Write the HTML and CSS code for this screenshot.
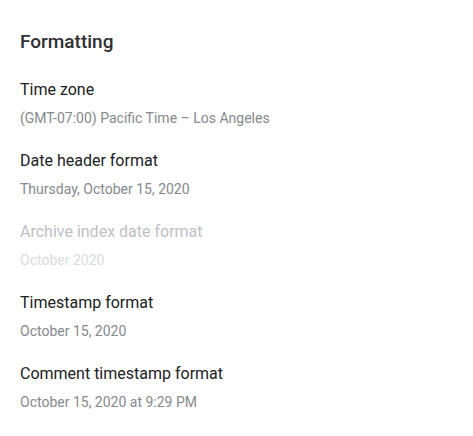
FILE: index.html
```html
<!DOCTYPE html>
<html>
<head>
<meta charset="utf-8">
<link rel="stylesheet" href="styles.css">
</head>
<body>
<section class="panel">
  <h2 class="title">Formatting</h2>
  <div class="list">
    <div class="item">
      <div class="label">Time zone</div>
      <div class="value">(GMT-07:00) Pacific Time – Los Angeles</div>
    </div>
    <div class="item">
      <div class="label">Date header format</div>
      <div class="value">Thursday, October 15, 2020</div>
    </div>
    <div class="item disabled">
      <div class="label">Archive index date format</div>
      <div class="value">October 2020</div>
    </div>
    <div class="item">
      <div class="label">Timestamp format</div>
      <div class="value">October 15, 2020</div>
    </div>
    <div class="item">
      <div class="label">Comment timestamp format</div>
      <div class="value">October 15, 2020 at 9:29 PM</div>
    </div>
  </div>
</section>
</body>
</html>
```
FILE: styles.css
```css
html, body {
  margin: 0;
  padding: 0;
  background: #ffffff;
}
body {
  font-family: Roboto, "Liberation Sans", Arial, sans-serif;
  color: #202124;
}
.panel {
  padding: 28px 20px 0 20px;
}
.title {
  margin: 0;
  font-size: 19px;
  font-weight: 500;
  line-height: 28px;
  color: #2d2f33;
}
.list {
  display: flex;
  flex-direction: column;
  margin-top: 24px;
  gap: 23px;
}
.item {
  display: flex;
  flex-direction: column;
  gap: 8px;
}
.label {
  font-size: 16px;
  line-height: 20px;
  color: #202124;
}
.value {
  font-size: 14px;
  line-height: 20px;
  color: #85898e;
}
.disabled .label {
  color: #bdc1c6;
}
.disabled .value {
  color: #dadce0;
}
```
